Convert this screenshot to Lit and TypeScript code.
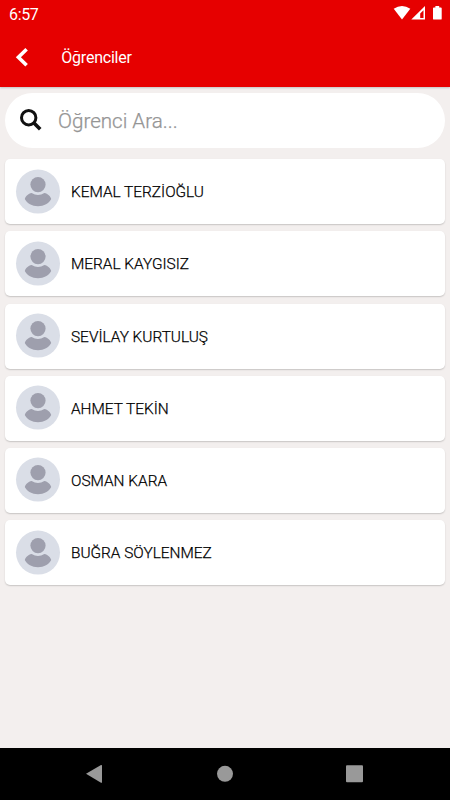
import { LitElement, html, css, svg } from "lit";
import { customElement, property, state } from "lit/decorators.js";

const font = css`Roboto, "Noto Sans", sans-serif`;

@customElement("status-bar")
class StatusBar extends LitElement {
  static styles = css`
    :host { display: flex; justify-content: space-between; height: 28px; color: #fff; }
    .time { font: 400 16px/29px ${font}; letter-spacing: -0.35px; padding-left: 9px; }
    svg { display: block; width: 70px; height: 28px; }
  `;
  render() {
    return html`
      <span class="time">6:57</span>
      <svg viewBox="0 0 70 28" fill="#fff">
        <path d="M13.7 8.8 Q22 3.4 30.3 8.8 L22 19.5Z" />
        <path fill-rule="evenodd" d="M45 6 V19.4 H31.3Z M43.5 10.2 L40.2 13.4 V18 H43.5Z" />
        <path d="M55.4 6 h3.8 v1.4 h1.6 q.9 0 .9 .9 v10.4 q0 .9-.9 .9 h-6.9 q-.9 0-.9-.9 v-10.4 q0-.9 .9-.9 h1.5z" />
      </svg>`;
  }
}

@customElement("student-card")
class StudentCard extends LitElement {
  @property() name = "";
  static styles = css`
    :host {
      display: flex; align-items: center; box-sizing: border-box; height: 65px;
      padding-left: 11px; gap: 11px; background: #fff; border-radius: 5px;
      box-shadow: 0 1px 1.5px rgba(0, 0, 0, 0.18);
    }
    svg { width: 44px; height: 44px; flex: none; }
    .name {
      font: 300 15.4px/20px ${font}; color: #000; -webkit-text-stroke: 0.25px #000;
      padding-top: 1px; white-space: nowrap;
    }
  `;
  render() {
    return html`
      <svg viewBox="0 0.4 44 44" overflow="visible">
        <circle cx="22" cy="22" r="22" fill="#dadee7" />
        <g fill="#9e9fad">
          <circle cx="22" cy="15" r="7.6" />
          <path d="M15.6 23.3 Q22 27.4 28.4 23.3 C31.7 23.9 34.5 26.5 35.2 29.4 C33 33.8 28 36.6 22 36.6 S11 33.8 8.8 29.4 C9.5 26.5 12.3 23.9 15.6 23.3Z" />
        </g>
      </svg>
      <span class="name">${this.name}</span>`;
  }
}

@customElement("app-root")
class AppRoot extends LitElement {
  @state() private students = [
    "KEMAL TERZİOĞLU",
    "MERAL KAYGISIZ",
    "SEVİLAY KURTULUŞ",
    "AHMET TEKİN",
    "OSMAN KARA",
    "BUĞRA SÖYLENMEZ",
  ];

  static styles = css`
    :host {
      display: flex; flex-direction: column; width: 450px; height: 800px;
      overflow: hidden; background: #f3efee; font-family: ${font};
    }
    header { height: 87px; flex: none; background: #e60000; color: #fff; box-shadow: 0 1px 2px rgba(0, 0, 0, 0.2); }
    .toolbar { display: flex; align-items: center; height: 59px; }
    .back { width: 14px; height: 22px; margin-left: 15px; }
    .title { font-size: 16px; letter-spacing: -0.22px; line-height: 20px; margin-left: 32.3px; padding-top: 1px; }
    main { flex: 1; padding: 6px 5.5px 0 5px; }
    .search { display: flex; align-items: center; height: 54.5px; border-radius: 28px; background: #fff; }
    .search svg { width: 22px; height: 22px; margin-left: 15px; }
    .hint {
      font-size: 20.6px; line-height: 26px; font-weight: 300; color: #959595;
      -webkit-text-stroke: 0.25px #959595; margin-left: 16px; padding-top: 1px;
    }
    .list { display: flex; flex-direction: column; gap: 7.2px; margin-top: 11.7px; }
    nav { height: 52.5px; flex: none; background: #000; }
    nav svg { display: block; width: 450px; height: 52px; }
  `;

  render() {
    return html`
      <header>
        <status-bar></status-bar>
        <div class="toolbar">
          <svg class="back" viewBox="0 0 14 22">
            <path d="M11.6 2.3 L3.4 10.2 L11.6 18.2" fill="none" stroke="#fff" stroke-width="3.6" />
          </svg>
          <span class="title">Öğrenciler</span>
        </div>
      </header>
      <main>
        <div class="search">
          <svg viewBox="0 0 22 22" fill="none" stroke="#111">
            <circle cx="8.7" cy="8.7" r="7.2" stroke-width="3" />
            <path d="M13.7 13.7 L20.2 20.2" stroke-width="3.6" />
          </svg>
          <span class="hint">Öğrenci Ara...</span>
        </div>
        <div class="list">
          ${this.students.map((s) => html`<student-card .name=${s}></student-card>`)}
        </div>
      </main>
      <nav>
        <svg viewBox="0 0 450 52" fill="#999">
          ${svg`<path d="M86 25.8 L101 17 Q102 16.6 102 17.6 V34.2 Q102 35.2 101 34.7Z" />
          <circle cx="225" cy="25.8" r="8" />
          <rect x="346" y="17.2" width="17" height="17" rx="1" />`}
        </svg>
      </nav>`;
  }
}
